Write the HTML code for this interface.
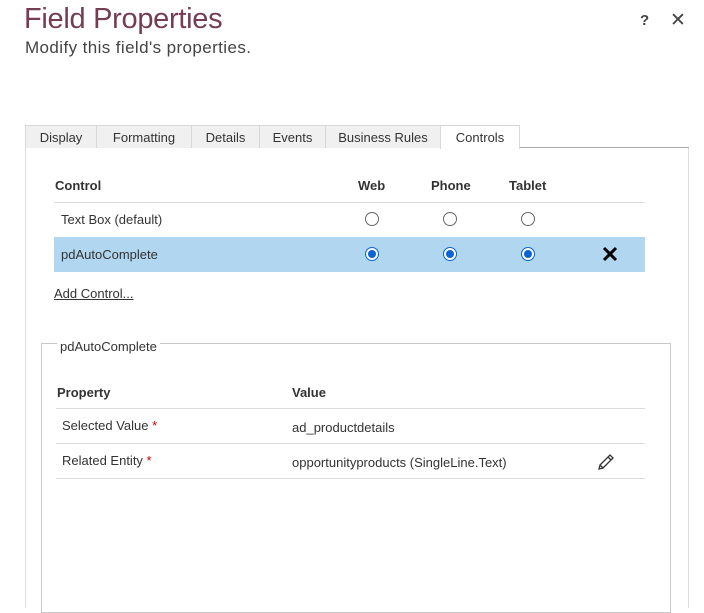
<!DOCTYPE html>
<html><head><style>
*{margin:0;padding:0;box-sizing:border-box}
body{width:704px;height:605px;overflow:hidden;background:#fff;font-family:"Segoe UI","Liberation Sans",sans-serif;color:#333;position:relative}
.a{position:absolute;white-space:nowrap}
.tab{position:absolute;top:125px;height:23px;background:#f0f0f0;border:1px solid #d8d8d8;border-bottom:none;font-size:13px;text-align:center;line-height:24px;color:#333}
.hd{font-weight:bold;font-size:13px;color:#333}
.t{font-size:13px;color:#333}
.line{position:absolute;height:1px;background:#dcdcdc}
.r{position:absolute;width:14px;height:14px;border-radius:50%;border:1px solid #666;background:#fff}
.rs{border:1px solid #0a64d6;background:#fff}
.rs::after{content:"";position:absolute;left:2px;top:2px;width:8px;height:8px;border-radius:50%;background:#0a64d6}
</style></head><body>
<div class="a" style="left:24px;top:3px;font-size:29px;letter-spacing:-0.3px;color:#743d54">Field Properties</div>
<div class="a" style="left:25px;top:38px;font-size:17px;letter-spacing:0.4px;color:#444">Modify this field's properties.</div>
<div class="a" style="left:640px;top:12px;font-size:15px;font-weight:bold;color:#444">?</div>
<div class="a" style="left:670px;top:9px;font-size:19px;color:#444">✕</div>

<div class="tab" style="left:25px;width:72px">Display</div>
<div class="tab" style="left:96px;width:96px">Formatting</div>
<div class="tab" style="left:191px;width:69px">Details</div>
<div class="tab" style="left:259px;width:67px">Events</div>
<div class="tab" style="left:325px;width:116px">Business Rules</div>
<div class="tab" style="left:440px;width:80px;background:#fff;height:24px;z-index:2">Controls</div>
<div class="a" style="left:520px;top:147px;width:169px;height:1px;background:#aaa"></div>
<div class="a" style="left:25px;top:148px;width:1px;height:460px;background:#ddd"></div>
<div class="a" style="left:688px;top:148px;width:1px;height:460px;background:#ddd"></div>

<div class="a hd" style="left:55px;top:178px">Control</div>
<div class="a hd" style="left:358px;top:178px">Web</div>
<div class="a hd" style="left:431px;top:178px">Phone</div>
<div class="a hd" style="left:509px;top:178px">Tablet</div>
<div class="line" style="left:54px;top:202px;width:591px"></div>
<div class="a t" style="left:61px;top:212px">Text Box (default)</div>
<div class="r" style="left:365px;top:212px"></div>
<div class="r" style="left:443px;top:212px"></div>
<div class="r" style="left:521px;top:212px"></div>
<div class="a" style="left:54px;top:237px;width:591px;height:35px;background:#b1d6f0"></div>
<div class="a t" style="left:61px;top:247px">pdAutoComplete</div>
<div class="r rs" style="left:365px;top:247px"></div>
<div class="r rs" style="left:443px;top:247px"></div>
<div class="r rs" style="left:521px;top:247px"></div>
<svg class="a" style="left:602px;top:246px" width="16" height="16"><path d="M2 2L14 14M14 2L2 14" stroke="#000" stroke-width="3"/></svg>
<div class="a t" style="left:54px;top:286px;text-decoration:underline">Add Control...</div>

<div class="a" style="left:41px;top:343px;width:630px;height:270px;border:1px solid #c8c8c8"></div>
<div class="a t" style="left:57px;top:339px;background:#fff;padding:0 3px">pdAutoComplete</div>
<div class="a hd" style="left:57px;top:385px">Property</div>
<div class="a hd" style="left:292px;top:385px">Value</div>
<div class="line" style="left:56px;top:408px;width:589px"></div>
<div class="a t" style="left:62px;top:418px">Selected Value <span style="color:#c00">*</span></div>
<div class="a t" style="left:292px;top:420px">ad_productdetails</div>
<div class="line" style="left:56px;top:443px;width:589px"></div>
<div class="a t" style="left:62px;top:453px">Related Entity <span style="color:#c00">*</span></div>
<div class="a t" style="left:292px;top:455px">opportunityproducts (SingleLine.Text)</div>
<svg class="a" style="left:596px;top:452px" width="20" height="20"><path d="M3 17L4 13L14 3L17 6L7 16Z M12 5L15 8 M4 13L7 16" fill="none" stroke="#333" stroke-width="1.3"/></svg>
<div class="line" style="left:56px;top:478px;width:589px"></div>
</body></html>
